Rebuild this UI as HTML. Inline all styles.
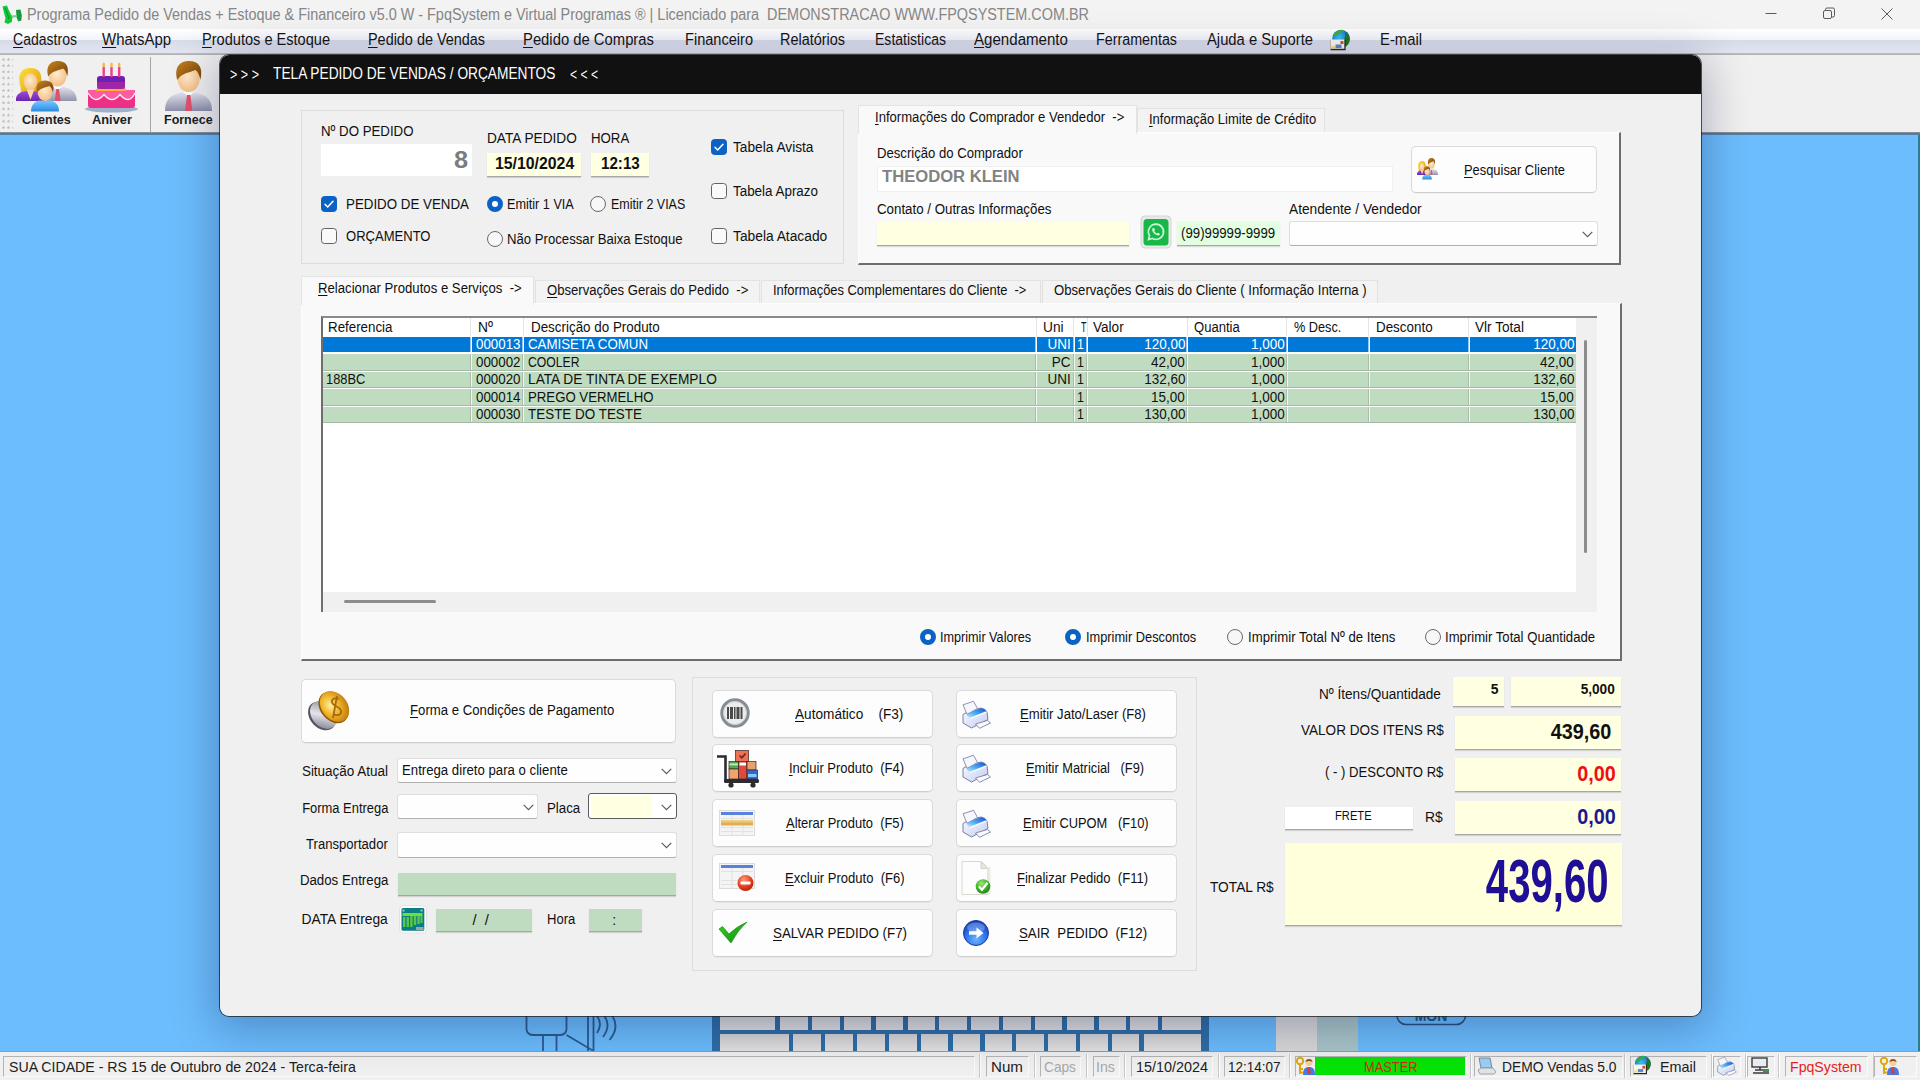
<!DOCTYPE html>
<html lang="pt-BR">
<head>
<meta charset="utf-8">
<title>Programa Pedido de Vendas</title>
<style>
*{box-sizing:border-box;margin:0;padding:0}
html,body{width:1920px;height:1080px;overflow:hidden;background:#6cbdfd;font-family:"Liberation Sans",sans-serif;color:#000}
.a{position:absolute;white-space:nowrap}
.t{white-space:pre;color:#101010}
u{text-decoration-thickness:1px;text-underline-offset:2px}
svg{position:absolute;overflow:visible}
#titlebar{left:0;top:0;width:1920px;height:29px;background:#f3f3f3}
#menubar{left:0;top:29px;width:1920px;height:25px;background:linear-gradient(#ffffff 0%,#f3f4fa 44%,#d7dbe9 48%,#e3e6f1 100%);border-bottom:1px solid #b9bcc6}
#toolbar{left:0;top:54px;width:1920px;height:81px;background:#f0f0f0;border-top:1px solid #b4b4b4}
#tbb{left:0;top:132px;width:1920px;height:3px;background:linear-gradient(#9a9fa4,#566b7e 60%,#5a8fbd)}
#status{left:0;top:1051px;width:1920px;height:29px;background:#f0f0f0;border-top:1px solid #9a9a9a}
.sp{top:1055.5px;height:21px;border:1px solid;border-color:#b4b4b4 #fbfbfb #fbfbfb #b4b4b4;background:#f0f0f0}
.ss{top:1054px;width:2px;height:24px;border-left:1px solid #c8c8c8;border-right:1px solid #fff}
#dlg{left:220px;top:55px;width:1481px;height:961px;background:#f0f0f0;border-radius:9px;overflow:hidden}
#dsh{left:220px;top:55px;width:1481px;height:961px;border-radius:9px;box-shadow:0 0 0 1px rgba(30,30,30,.75),0 8px 44px 6px rgba(0,10,60,.27)}
#in{left:-220px;top:-55px;width:1920px;height:1080px}
#dlgt{left:220px;top:55px;width:1481px;height:39px;background:#111}
.gb{border:1px solid #dcdcdc}
.pn{background:#f9f9f9;border-style:solid;border-color:#fdfdfd #6d6d6d #6d6d6d #fdfdfd;border-width:1px 2px 2px 1px}
.tab{background:#f3f3f3;border:1px solid #e2e2e2;border-bottom:none}
.tabs{background:#f9f9f9;border:1px solid #e4e4e4;border-bottom:none}
.btn{background:#fdfdfd;border:1px solid #dadada;border-bottom-color:#cfcfcf;border-radius:5px;box-shadow:0 1px 0 rgba(0,0,0,.04)}
.cb{background:#fefefe;border:1px solid #dedede;border-bottom-color:#b0b0b0;border-radius:3px}
.in{border-bottom:1px solid #a6a6a6;box-shadow:0 1px 1px rgba(0,0,0,.12)}
.y{background:#ffffe1}
.g{background:#c0dcc0}
.ck{width:16px;height:16px;border-radius:3.5px;border:1px solid #626262;background:#f9f9f9}
.ck.on{background:#0b62c4;border-color:#0b62c4}
.rd{width:16px;height:16px;border-radius:50%;border:1px solid #6a6a6a;background:#f7f7f7}
.rd.on{border:5px solid #0b62c4;background:#fff}
.row{background:#c0dcc0}
.row.sel{background:#0078d7}
.vl{width:2px;background:#e9efe9}
</style>
</head>
<body>

<div class="a" id="titlebar"></div>
<svg style="left:2px;top:5px" width="21.0" height="21.0" viewBox="0 0 21 21"><path d="M.5 1.500L5 .500L6.500 4.500L9 9.500L10.500 11.500L9.800 17L6 19L2.500 17.500L3.500 13L2 8Z" fill="#12c83a"/><path d="M14 5L18.500 4.500L19.800 10.500L19.300 15.500L16.300 16.500L14.600 12.500Z" fill="#189a3c"/><path d="M9.500 10.500L15 10v2L10 12.800z" fill="#7ccf98"/><path d="M3 3l2.500 6L7 14" stroke="#0a9a2a" stroke-width="1.200" fill="none"/></svg>
<span class="a t" style="left:27.3px;top:6.7px;font-size:15.6px;line-height:15.6px;color:#868686;transform:scaleX(0.924);transform-origin:0 0">Programa Pedido de Vendas + Estoque &amp; Financeiro v5.0 W - FpqSystem e Virtual Programas ® | Licenciado para  DEMONSTRACAO WWW.FPQSYSTEM.COM.BR</span>
<svg style="left:1750px;top:0" width="170" height="28" viewBox="0 0 170 28"><g fill="none" stroke="#5a5a5a" stroke-width="1"><path d="M15.5 13.5h11"/><rect x="73.5" y="10.5" width="8" height="8" rx="1.5"/><path d="M75.5 10.5v-1a1.5 1.5 0 0 1 1.5-1.5h6a1.5 1.5 0 0 1 1.5 1.5v6a1.5 1.5 0 0 1-1.5 1.5h-1"/><path d="M131.5 8.5l11 11m0-11l-11 11"/></g></svg>
<div class="a" id="menubar"></div>
<span class="a t" style="left:13px;top:31.64px;font-size:16px;line-height:16px;color:#151515;transform:scaleX(0.877);transform-origin:0 0"><u>C</u>adastros</span>
<span class="a t" style="left:102px;top:31.64px;font-size:16px;line-height:16px;color:#151515;transform:scaleX(0.935);transform-origin:0 0"><u>W</u>hatsApp</span>
<span class="a t" style="left:202px;top:31.64px;font-size:16px;line-height:16px;color:#151515;transform:scaleX(0.911);transform-origin:0 0"><u>P</u>rodutos e Estoque</span>
<span class="a t" style="left:368px;top:31.64px;font-size:16px;line-height:16px;color:#151515;transform:scaleX(0.901);transform-origin:0 0"><u>P</u>edido de Vendas</span>
<span class="a t" style="left:523px;top:31.64px;font-size:16px;line-height:16px;color:#151515;transform:scaleX(0.926);transform-origin:0 0"><u>P</u>edido de Compras</span>
<span class="a t" style="left:685px;top:31.64px;font-size:16px;line-height:16px;color:#151515;transform:scaleX(0.910);transform-origin:0 0">Financeiro</span>
<span class="a t" style="left:780px;top:31.64px;font-size:16px;line-height:16px;color:#151515;transform:scaleX(0.902);transform-origin:0 0">Relatórios</span>
<span class="a t" style="left:875px;top:31.64px;font-size:16px;line-height:16px;color:#151515;transform:scaleX(0.877);transform-origin:0 0">Estatisticas</span>
<span class="a t" style="left:974px;top:31.64px;font-size:16px;line-height:16px;color:#151515;transform:scaleX(0.943);transform-origin:0 0"><u>A</u>gendamento</span>
<span class="a t" style="left:1096px;top:31.64px;font-size:16px;line-height:16px;color:#151515;transform:scaleX(0.893);transform-origin:0 0">Ferramentas</span>
<span class="a t" style="left:1207px;top:31.64px;font-size:16px;line-height:16px;color:#151515;transform:scaleX(0.924);transform-origin:0 0">Ajuda e Suporte</span>
<span class="a t" style="left:1380px;top:31.64px;font-size:16px;line-height:16px;color:#151515;transform:scaleX(0.926);transform-origin:0 0">E-mail</span>
<svg style="left:1329px;top:30px" width="22.0" height="21.0" viewBox="0 0 22 21"><defs><radialGradient id="g1" cx=".4" cy=".45" r=".6"><stop offset="0" stop-color="#38c4f8"/><stop offset="1" stop-color="#1c62c8"/></radialGradient></defs><circle cx="12" cy="8.500" r="8.800" fill="url(#g1)"/><path d="M4.500 4.500C7 0 13-1 16 1c-2 1-5 1.500-7 3.500S6 7 4.500 4.500z" fill="#3cae3a"/><path d="M16 1.500c3 1.500 5 4.500 4.800 8-.3 4-2.500 6.500-5 7.500l-.5-8c1-2 1.500-5 .7-7.500z" fill="#1e7a1c"/><rect x="1.500" y="9.500" width="14.500" height="10" fill="#fbf8ea"/><path d="M1.500 19.500h14.500v-10" fill="none" stroke="#2a2a1e" stroke-width="1.300"/><path d="M1.500 9.500v10" stroke="#b8b8a8" stroke-width=".8"/><rect x="11.500" y="11" width="3" height="3" fill="#d04a3a"/><rect x="6.500" y="14.500" width="6" height="3.500" fill="#5a8ad0"/><rect x="2.500" y="16" width="3.500" height="2.500" fill="#f4dc8a"/></svg>
<div class="a" id="toolbar"></div><div class="a" id="tbb"></div>
<div class="a" style="left:2px;top:58px;width:11px;height:72px;background-image:radial-gradient(circle at 1.5px 1.5px,#c4c4c4 1.1px,transparent 1.4px);background-size:5px 6.2px"></div>
<div class="a" style="left:150px;top:57px;width:1px;height:75px;background:#a6a6a6"></div>
<svg style="overflow:hidden;left:16px;top:61px" width="62.0" height="50.5" viewBox="0 0 62 50.5"><defs><linearGradient id="gsuit" x1="0" y1="0" x2="0" y2="1"><stop offset="0" stop-color="#e2e2ec"/><stop offset="1" stop-color="#8c8ea8"/></linearGradient><radialGradient id="gskin" cx=".45" cy=".4" r=".75"><stop offset="0" stop-color="#ffeccc"/><stop offset="1" stop-color="#f2b474"/></radialGradient><linearGradient id="ghair" x1="0" y1="0" x2="1" y2="1"><stop offset="0" stop-color="#c88420"/><stop offset="1" stop-color="#6e3e06"/></linearGradient><linearGradient id="gblond" x1="0" y1="0" x2="1" y2="1"><stop offset="0" stop-color="#ffe23a"/><stop offset="1" stop-color="#d89410"/></linearGradient><linearGradient id="gpurp" x1="0" y1="0" x2="0" y2="1"><stop offset="0" stop-color="#9a4ae0"/><stop offset="1" stop-color="#5e1ea0"/></linearGradient><linearGradient id="gblue" x1="0" y1="0" x2="0" y2="1"><stop offset="0" stop-color="#7ac8ff"/><stop offset="1" stop-color="#2a8ae0"/></linearGradient></defs><svg x="0" y="0" width="62" height="40" viewBox="0 0 62 40" style="position:static;overflow:hidden"><g transform="translate(22.2 0) scale(0.82)"><path d="M0 50C0 38 5 34.500 16 31.500L31 31.500C42 34.500 47 38 47 50Z" fill="url(#gsuit)"/><path d="M18 31l5.500 5 5.500-5z" fill="#fff"/><path d="M22 34h3.400l2 16h-7.400z" fill="#e2506c"/><ellipse cx="23.600" cy="18" rx="11" ry="13" fill="url(#gskin)"/><path d="M12.300 19C8.500 5 16 0 24 0c9.500 0 14.500 6 11.300 19c-.8-5-2.500-8.500-4.800-10c-6 2.500-14 3-18.200 10z" fill="url(#ghair)"/></g><g transform="translate(2 7) scale(0.86)"><path d="M3 22C-2 5 6 0 14.500 0C24 0 30 6 26 22c0 5 2 8 3 11H0c3-3 4-6 3-11z" fill="url(#gblond)"/><path d="M-3 41C-3 31 1 28.500 8 27h13c7 1.500 11 4 11 14z" fill="url(#gpurp)"/><ellipse cx="14.500" cy="16" rx="8" ry="10" fill="url(#gskin)"/><path d="M10 25l4.500 12 4.500-12z" fill="#fbd8a8"/></g></svg><g transform="translate(18.5 19.5) scale(1.0)"><path d="M-3.500 31C-3.500 24 0 21.500 5 20h11c5 1.500 8.500 4 8.500 11z" fill="url(#gblue)"/><ellipse cx="10.500" cy="11" rx="7.500" ry="9.500" fill="url(#gskin)"/><path d="M2.600 12C0 3 5 0 10.500 0S21 3.500 18.400 12c-.8-3.500-2-5.500-3.500-6.500-4 1.500-9 2-12.300 6.500z" fill="url(#ghair)"/></g></svg>
<svg style="left:85px;top:62px" width="53.0" height="51.0" viewBox="0 0 53 51"><ellipse cx="26.500" cy="47" rx="26.500" ry="3.500" fill="#9fb0cc"/><rect x="3" y="28" width="47" height="18" rx="3" fill="#ee2f86"/><path d="M3 31q4 6.500 8 6.500t8-5q4 5 8 5t8-5q4 5 8 5t7-6.500v-3H3z" fill="#ff5aa4"/><path d="M3 31q4 6.500 8 6.500t8-5q4 5 8 5t8-5q4 5 8 5t7-6.500" fill="none" stroke="#ffe6f0" stroke-width="1.400"/><rect x="12" y="14" width="28" height="13" rx="3" fill="#6a22b4"/><rect x="12" y="20" width="28" height="7" fill="#c42aa0" opacity=".6"/><path d="M11 27h30v2H11z" fill="#ffb02a"/><g fill="#f03a8a"><rect x="17.500" y="5" width="2.400" height="10"/><rect x="25.300" y="5" width="2.400" height="10"/><rect x="33" y="5" width="2.400" height="10"/></g><g fill="#ffb43a"><ellipse cx="18.700" cy="3" rx="1.300" ry="2.400"/><ellipse cx="26.500" cy="3" rx="1.300" ry="2.400"/><ellipse cx="34.200" cy="3" rx="1.300" ry="2.400"/></g></svg>
<svg style="overflow:hidden;left:165px;top:61px" width="48.0" height="50.5" viewBox="0 0 48 50.5"><g transform="translate(0 0) scale(1.0)"><path d="M0 50C0 38 5 34.500 16 31.500L31 31.500C42 34.500 47 38 47 50Z" fill="url(#gsuit)"/><path d="M18 31l5.500 5 5.500-5z" fill="#fff"/><path d="M22 34h3.400l2 16h-7.400z" fill="#e2506c"/><ellipse cx="23.600" cy="18" rx="11" ry="13" fill="url(#gskin)"/><path d="M12.300 19C8.500 5 16 0 24 0c9.500 0 14.500 6 11.300 19c-.8-5-2.500-8.500-4.800-10c-6 2.500-14 3-18.200 10z" fill="url(#ghair)"/></g></svg>
<span class="a t" style="left:21.5px;top:113.95px;font-size:12.2px;line-height:12.2px;font-weight:bold;color:#1e1e1e;transform:scaleX(1.028);transform-origin:0 0">Clientes</span>
<span class="a t" style="left:91.9px;top:113.95px;font-size:12.2px;line-height:12.2px;font-weight:bold;color:#1e1e1e;transform:scaleX(1.054);transform-origin:0 0">Aniver</span>
<span class="a t" style="left:164.4px;top:113.95px;font-size:12.2px;line-height:12.2px;font-weight:bold;color:#1e1e1e;transform:scaleX(1.025);transform-origin:0 0">Fornece</span>
<div class="a" style="left:1918px;top:135px;width:2px;height:916px;background:#2c7c92"></div>
<div class="a" style="left:712px;top:1010px;width:497px;height:41px;background:#2f6ea6"></div>
<div class="a" style="left:719.7px;top:1010px;width:55.5px;height:20px;background:linear-gradient(#d0d0d0,#e0e0e0)"></div><div class="a" style="left:780.1px;top:1010px;width:27.6px;height:20px;background:linear-gradient(#d0d0d0,#e0e0e0)"></div><div class="a" style="left:811.95px;top:1010px;width:27.6px;height:20px;background:linear-gradient(#d0d0d0,#e0e0e0)"></div><div class="a" style="left:843.8px;top:1010px;width:27.6px;height:20px;background:linear-gradient(#d0d0d0,#e0e0e0)"></div><div class="a" style="left:875.65px;top:1010px;width:27.6px;height:20px;background:linear-gradient(#d0d0d0,#e0e0e0)"></div><div class="a" style="left:907.5px;top:1010px;width:27.6px;height:20px;background:linear-gradient(#d0d0d0,#e0e0e0)"></div><div class="a" style="left:939.35px;top:1010px;width:27.6px;height:20px;background:linear-gradient(#d0d0d0,#e0e0e0)"></div><div class="a" style="left:971.2px;top:1010px;width:27.6px;height:20px;background:linear-gradient(#d0d0d0,#e0e0e0)"></div><div class="a" style="left:1003.05px;top:1010px;width:27.6px;height:20px;background:linear-gradient(#d0d0d0,#e0e0e0)"></div><div class="a" style="left:1034.9px;top:1010px;width:27.6px;height:20px;background:linear-gradient(#d0d0d0,#e0e0e0)"></div><div class="a" style="left:1066.75px;top:1010px;width:27.6px;height:20px;background:linear-gradient(#d0d0d0,#e0e0e0)"></div><div class="a" style="left:1098.6px;top:1010px;width:27.6px;height:20px;background:linear-gradient(#d0d0d0,#e0e0e0)"></div><div class="a" style="left:1130.45px;top:1010px;width:27.6px;height:20px;background:linear-gradient(#d0d0d0,#e0e0e0)"></div><div class="a" style="left:1162.3px;top:1010px;width:38.7px;height:20px;background:linear-gradient(#d0d0d0,#e0e0e0)"></div><div class="a" style="left:719.7px;top:1034px;width:69px;height:17px;background:linear-gradient(#d4d4d4,#e4e4e4)"></div><div class="a" style="left:793.4px;top:1034px;width:27.6px;height:17px;background:linear-gradient(#d4d4d4,#e4e4e4)"></div><div class="a" style="left:825.25px;top:1034px;width:27.6px;height:17px;background:linear-gradient(#d4d4d4,#e4e4e4)"></div><div class="a" style="left:857.1px;top:1034px;width:27.6px;height:17px;background:linear-gradient(#d4d4d4,#e4e4e4)"></div><div class="a" style="left:888.95px;top:1034px;width:27.6px;height:17px;background:linear-gradient(#d4d4d4,#e4e4e4)"></div><div class="a" style="left:920.8px;top:1034px;width:27.6px;height:17px;background:linear-gradient(#d4d4d4,#e4e4e4)"></div><div class="a" style="left:952.65px;top:1034px;width:27.6px;height:17px;background:linear-gradient(#d4d4d4,#e4e4e4)"></div><div class="a" style="left:984.5px;top:1034px;width:27.6px;height:17px;background:linear-gradient(#d4d4d4,#e4e4e4)"></div><div class="a" style="left:1016.35px;top:1034px;width:27.6px;height:17px;background:linear-gradient(#d4d4d4,#e4e4e4)"></div><div class="a" style="left:1048.2px;top:1034px;width:27.6px;height:17px;background:linear-gradient(#d4d4d4,#e4e4e4)"></div><div class="a" style="left:1080.05px;top:1034px;width:27.6px;height:17px;background:linear-gradient(#d4d4d4,#e4e4e4)"></div><div class="a" style="left:1111.9px;top:1034px;width:27.6px;height:17px;background:linear-gradient(#d4d4d4,#e4e4e4)"></div><div class="a" style="left:1143.75px;top:1034px;width:57.25px;height:17px;background:linear-gradient(#d4d4d4,#e4e4e4)"></div>
<div class="a" style="left:1276px;top:1010px;width:41px;height:41px;background:#d9d9d9"></div>
<div class="a" style="left:1317px;top:1010px;width:40.5px;height:41px;background:#a9c6c8"></div>
<svg style="left:520px;top:1005px" width="110" height="46" viewBox="520 1005 110 46"><g fill="none" stroke="#2b5c8e" stroke-width="1.8"><rect x="526.5" y="1000" width="40" height="35" rx="6"/><path d="M566.5 1035l27 16V1000"/><path d="M588 1000v51"/><path d="M543 1035v17M556.5 1035v17"/><path d="M597 1016q6 8 0 17M603 1014q9 11 0 23M609.500 1012q12 14 0 28"/></g></svg>
<svg style="left:1390px;top:1005px" width="90" height="30" viewBox="1390 1005 90 30"><rect x="1397" y="1000" width="68.500" height="24.500" rx="9" fill="none" stroke="#27527e" stroke-width="1.6"/><text x="1431" y="1021" font-family="Liberation Sans,sans-serif" font-weight="bold" font-size="14" text-anchor="middle" fill="#27527e">MON</text></svg>
<div class="a" id="status"></div>
<div class="a sp" style="left:3px;width:972px"></div>
<span class="a t" style="left:9px;top:1058.8px;font-size:15px;line-height:15px;color:#202020;transform:scaleX(0.944);transform-origin:0 0">SUA CIDADE - RS 15 de Outubro de 2024 - Terca-feira</span>
<div class="a ss" style="left:979px"></div>
<div class="a ss" style="left:1033.5px"></div>
<div class="a ss" style="left:1086px"></div>
<div class="a ss" style="left:1124px"></div>
<div class="a ss" style="left:1217.5px"></div>
<div class="a ss" style="left:1289px"></div>
<div class="a ss" style="left:1470px"></div>
<div class="a ss" style="left:1624px"></div>
<div class="a ss" style="left:1711px"></div>
<div class="a ss" style="left:1744.5px"></div>
<div class="a ss" style="left:1777.5px"></div>
<div class="a ss" style="left:1873px"></div>
<div class="a sp" style="left:986px;width:43px"></div>
<span class="a t" style="left:990.5px;top:1058.8px;font-size:15px;line-height:15px;color:#202020;transform:scaleX(1.010);transform-origin:0 0">Num</span>
<div class="a sp" style="left:1040px;width:41px"></div>
<span class="a t" style="left:1044px;top:1058.8px;font-size:15px;line-height:15px;color:#a8a8a8;transform:scaleX(0.913);transform-origin:0 0">Caps</span>
<div class="a sp" style="left:1092.5px;width:27.5px"></div>
<span class="a t" style="left:1096px;top:1058.8px;font-size:15px;line-height:15px;color:#a8a8a8;transform:scaleX(0.949);transform-origin:0 0">Ins</span>
<div class="a sp" style="left:1131px;width:81.5px"></div>
<span class="a t" style="left:1135.5px;top:1058.8px;font-size:15px;line-height:15px;color:#202020;transform:scaleX(0.959);transform-origin:0 0">15/10/2024</span>
<div class="a sp" style="left:1224px;width:61px"></div>
<span class="a t" style="left:1227.5px;top:1058.8px;font-size:15px;line-height:15px;color:#202020;transform:scaleX(0.899);transform-origin:0 0">12:14:07</span>
<div class="a sp" style="left:1295px;width:172px"></div>
<svg style="left:1296px;top:1057px" width="20.0" height="18.0" viewBox="0 0 20 18"><circle cx="4" cy="4" r="3.200" fill="none" stroke="#e0a80c" stroke-width="2"/><path d="M4 7v10M4 12h3M4 15.500h3" stroke="#e0a80c" stroke-width="2" fill="none"/><circle cx="13" cy="5.500" r="3.600" fill="#f6cfa0"/><path d="M9.500 5c0-4 7-4 7 0-2-1.500-5-1.500-7 0z" fill="#8a5214"/><path d="M7 18c0-6 2-8 6-8s6 2 6 8z" fill="#4a7ae0"/><path d="M12 10.500h2l.6 6h-3.200z" fill="#e03a3a"/></svg>
<div class="a" style="left:1315px;top:1057px;width:150px;height:17.5px;background:#05e305"></div>
<span class="a t" style="left:1364px;top:1058.8px;font-size:15px;line-height:15px;color:#d02a10;transform:scaleX(0.856);transform-origin:0 0">MASTER</span>
<div class="a sp" style="left:1474px;width:149px"></div>
<svg style="left:1477px;top:1057px" width="20.0" height="18.0" viewBox="0 0 20 18"><path d="M2 1h11l2 10H4z" fill="#9ad0f4" stroke="#7a8a9a"/><path d="M1 13l3-2h12l3 4-2 2H3z" fill="#e0e4ea" stroke="#8a94a0" stroke-width=".8"/></svg>
<span class="a t" style="left:1501.5px;top:1058.8px;font-size:15px;line-height:15px;color:#202020;transform:scaleX(0.922);transform-origin:0 0">DEMO Vendas 5.0</span>
<div class="a sp" style="left:1630px;width:77px"></div>
<svg style="left:1632px;top:1056px" width="19.8" height="18.9" viewBox="0 0 22 21"><defs><radialGradient id="g2" cx=".4" cy=".45" r=".6"><stop offset="0" stop-color="#38c4f8"/><stop offset="1" stop-color="#1c62c8"/></radialGradient></defs><circle cx="12" cy="8.500" r="8.800" fill="url(#g2)"/><path d="M4.500 4.500C7 0 13-1 16 1c-2 1-5 1.500-7 3.500S6 7 4.500 4.500z" fill="#3cae3a"/><path d="M16 1.500c3 1.500 5 4.500 4.800 8-.3 4-2.500 6.500-5 7.500l-.5-8c1-2 1.500-5 .7-7.500z" fill="#1e7a1c"/><rect x="1.500" y="9.500" width="14.500" height="10" fill="#fbf8ea"/><path d="M1.500 19.500h14.500v-10" fill="none" stroke="#2a2a1e" stroke-width="1.300"/><path d="M1.500 9.500v10" stroke="#b8b8a8" stroke-width=".8"/><rect x="11.500" y="11" width="3" height="3" fill="#d04a3a"/><rect x="6.500" y="14.500" width="6" height="3.500" fill="#5a8ad0"/><rect x="2.500" y="16" width="3.500" height="2.500" fill="#f4dc8a"/></svg>
<span class="a t" style="left:1660px;top:1058.8px;font-size:15px;line-height:15px;color:#202020;transform:scaleX(0.960);transform-origin:0 0">Email</span>
<div class="a sp" style="left:1713px;width:28px"></div>
<svg style="left:1717px;top:1057px" width="19.72" height="19.04" viewBox="0 0 29 28"><defs><linearGradient id="g3" x1="0" y1="1" x2="1" y2="0"><stop offset="0" stop-color="#c8f0ff"/><stop offset=".45" stop-color="#4ab0f4"/><stop offset="1" stop-color="#1a4ed8"/></linearGradient><linearGradient id="g4" x1="0" y1="0" x2="1" y2="1"><stop offset="0" stop-color="#fafbff"/><stop offset="1" stop-color="#c4ccf2"/></linearGradient></defs><path d="M1 13.500L7 10L19 7Q24 8 25 11L26 18.500L9.500 27L1 22Z" fill="url(#g4)" stroke="#6c7496" stroke-width=".9" stroke-linejoin="round"/><path d="M4.500 14L12 9.500L19 7.300Q23.500 8 24.300 10.600L8 17.500Z" fill="url(#g3)"/><path d="M1 3.800L11.500.300L15.500 7.500L12 9.500L5 13.300Z" fill="#f6f6ff" stroke="#8088a8" stroke-width=".9" stroke-linejoin="round"/><path d="M8 17.500L24.500 11" fill="none" stroke="#f4f8ff" stroke-width="1.600"/><path d="M13.500 23L25.500 19.500L28.500 22L17.500 27.300Z" fill="#fafaff" stroke="#7a82a0" stroke-width=".9" stroke-linejoin="round"/></svg>
<div class="a sp" style="left:1747px;width:28px"></div>
<svg style="left:1751px;top:1057px" width="20.0" height="18.0" viewBox="0 0 20 18"><rect x="1" y="1" width="15" height="9" fill="#e8ecf0" stroke="#3a3a3a" stroke-width="1.400"/><path d="M4 13h10M9 10v3M2 16h16" stroke="#3a3a3a" stroke-width="1.600"/><rect x="12" y="12" width="6" height="3" fill="#4a8a4a"/></svg>
<div class="a sp" style="left:1785px;width:82.5px"></div>
<span class="a t" style="left:1790px;top:1058.8px;font-size:15px;line-height:15px;color:#e8201c;transform:scaleX(0.943);transform-origin:0 0">FpqSystem</span>
<div class="a sp" style="left:1874px;width:43px"></div>
<svg style="left:1880px;top:1057px" width="20.0" height="18.0" viewBox="0 0 20 18"><circle cx="4" cy="4" r="3.200" fill="none" stroke="#e0a80c" stroke-width="2"/><path d="M4 7v10M4 12h3M4 15.500h3" stroke="#e0a80c" stroke-width="2" fill="none"/><circle cx="13" cy="5.500" r="3.600" fill="#f6cfa0"/><path d="M9.500 5c0-4 7-4 7 0-2-1.500-5-1.500-7 0z" fill="#8a5214"/><path d="M7 18c0-6 2-8 6-8s6 2 6 8z" fill="#4a7ae0"/><path d="M12 10.500h2l.6 6h-3.200z" fill="#e03a3a"/></svg>
<div class="a" id="dsh"></div><div class="a" id="dlg"><div class="a" id="in">
<div class="a" id="dlgt"></div>
<span class="a t" style="left:230px;top:66.64px;font-size:16px;line-height:16px;color:#fff;transform:scaleX(0.785);transform-origin:0 0">&gt; &gt; &gt;</span>
<span class="a t" style="left:273px;top:66.24px;font-size:16px;line-height:16px;color:#fff;transform:scaleX(0.857);transform-origin:0 0">TELA PEDIDO DE VENDAS / ORÇAMENTOS</span>
<span class="a t" style="left:570px;top:66.64px;font-size:16px;line-height:16px;color:#fff;transform:scaleX(0.758);transform-origin:0 0">&lt; &lt; &lt;</span>
<div class="a gb" style="left:301px;top:110px;width:543px;height:154px;"></div>
<span class="a t" style="left:320.5px;top:123.02px;font-size:15.5px;line-height:15.5px;transform:scaleX(0.855);transform-origin:0 0">Nº DO PEDIDO</span>
<div class="a" style="left:321px;top:144px;width:151px;height:32px;background:#fff"></div>
<span class="a t" style="left:454.92px;top:148.74px;font-size:23.5px;line-height:23.5px;font-weight:bold;color:#7c7c7c;transform:scaleX(1.080);transform-origin:100% 0">8</span>
<span class="a t" style="left:486.75px;top:129.52px;font-size:15.5px;line-height:15.5px;transform:scaleX(0.881);transform-origin:0 0">DATA PEDIDO</span>
<span class="a t" style="left:590.5px;top:129.52px;font-size:15.5px;line-height:15.5px;transform:scaleX(0.854);transform-origin:0 0">HORA</span>
<div class="a in y" style="left:487px;top:152.5px;width:94px;height:24.5px;"></div>
<span class="a t" style="left:494.5px;top:155.13px;font-size:17.3px;line-height:17.3px;font-weight:bold;transform:scaleX(0.916);transform-origin:0 0">15/10/2024</span>
<div class="a in y" style="left:591px;top:152.5px;width:58px;height:24.5px;"></div>
<span class="a t" style="left:600.75px;top:155.13px;font-size:17.3px;line-height:17.3px;font-weight:bold;transform:scaleX(0.877);transform-origin:0 0">12:13</span>
<div class="a ck on" style="left:321px;top:196px"><svg style="left:-1px;top:-1px" width="16" height="16" viewBox="0 0 16 16"><path d="M4 8.300l2.700 2.700 5.300-5.800" fill="none" stroke="#fff" stroke-width="1.500" stroke-linecap="round" stroke-linejoin="round"/></svg></div>
<span class="a t" style="left:345.5px;top:195.77px;font-size:15.5px;line-height:15.5px;transform:scaleX(0.860);transform-origin:0 0">PEDIDO DE VENDA</span>
<div class="a ck" style="left:321px;top:228px"></div>
<span class="a t" style="left:345.5px;top:228.27px;font-size:15.5px;line-height:15.5px;transform:scaleX(0.841);transform-origin:0 0">ORÇAMENTO</span>
<div class="a rd on" style="left:486.5px;top:196px"></div>
<span class="a t" style="left:507px;top:195.77px;font-size:15.5px;line-height:15.5px;transform:scaleX(0.816);transform-origin:0 0">Emitir 1 VIA</span>
<div class="a rd" style="left:590px;top:196px"></div>
<span class="a t" style="left:610.75px;top:195.77px;font-size:15.5px;line-height:15.5px;transform:scaleX(0.806);transform-origin:0 0">Emitir 2 VIAS</span>
<div class="a rd" style="left:486.5px;top:231px"></div>
<span class="a t" style="left:507px;top:230.77px;font-size:15.5px;line-height:15.5px;transform:scaleX(0.849);transform-origin:0 0">Não Processar Baixa Estoque</span>
<div class="a ck on" style="left:711px;top:139px"><svg style="left:-1px;top:-1px" width="16" height="16" viewBox="0 0 16 16"><path d="M4 8.300l2.700 2.700 5.300-5.800" fill="none" stroke="#fff" stroke-width="1.500" stroke-linecap="round" stroke-linejoin="round"/></svg></div>
<span class="a t" style="left:732.5px;top:139.27px;font-size:15.5px;line-height:15.5px;transform:scaleX(0.884);transform-origin:0 0">Tabela Avista</span>
<div class="a ck" style="left:711px;top:183px"></div>
<span class="a t" style="left:732.5px;top:183.27px;font-size:15.5px;line-height:15.5px;transform:scaleX(0.865);transform-origin:0 0">Tabela Aprazo</span>
<div class="a ck" style="left:711px;top:228px"></div>
<span class="a t" style="left:732.5px;top:228.27px;font-size:15.5px;line-height:15.5px;transform:scaleX(0.889);transform-origin:0 0">Tabela Atacado</span>
<div class="a tab" style="left:1137px;top:107.5px;width:188px;height:25.5px;"></div>
<div class="a pn" style="left:857.5px;top:132px;width:763.5px;height:133px;"></div>
<div class="a tabs" style="left:857.5px;top:105px;width:279px;height:29px;"></div>
<span class="a t" style="left:875px;top:108.52px;font-size:15.5px;line-height:15.5px;transform:scaleX(0.845);transform-origin:0 0"><u>I</u>nformações do Comprador e Vendedor  -&gt;</span>
<span class="a t" style="left:1149px;top:110.77px;font-size:15.5px;line-height:15.5px;transform:scaleX(0.840);transform-origin:0 0"><u>I</u>nformação Limite de Crédito</span>
<span class="a t" style="left:876.75px;top:144.52px;font-size:15.5px;line-height:15.5px;transform:scaleX(0.846);transform-origin:0 0">Descrição do Comprador</span>
<div class="a" style="left:877px;top:166px;width:515.5px;height:26px;background:#fff;border:1px solid #f0f0f0"></div>
<span class="a t" style="left:882px;top:168.71px;font-size:16.8px;line-height:16.8px;font-weight:bold;color:#828282;transform:scaleX(0.990);transform-origin:0 0">THEODOR KLEIN</span>
<div class="a btn" style="left:1410.5px;top:146px;width:186.5px;height:47px;"></div>
<svg style="left:1417px;top:158px" width="21.500" height="21.500" viewBox="0 0 62 50.500" preserveAspectRatio="none"><svg x="0" y="0" width="62" height="40" viewBox="0 0 62 40" style="position:static;overflow:hidden"><g transform="translate(22.2 0) scale(0.82)"><path d="M0 50C0 38 5 34.500 16 31.500L31 31.500C42 34.500 47 38 47 50Z" fill="url(#gsuit)"/><path d="M18 31l5.500 5 5.500-5z" fill="#fff"/><path d="M22 34h3.400l2 16h-7.400z" fill="#e2506c"/><ellipse cx="23.600" cy="18" rx="11" ry="13" fill="url(#gskin)"/><path d="M12.300 19C8.500 5 16 0 24 0c9.500 0 14.500 6 11.300 19c-.8-5-2.500-8.500-4.800-10c-6 2.500-14 3-18.200 10z" fill="url(#ghair)"/></g><g transform="translate(2 7) scale(0.86)"><path d="M3 22C-2 5 6 0 14.500 0C24 0 30 6 26 22c0 5 2 8 3 11H0c3-3 4-6 3-11z" fill="url(#gblond)"/><path d="M-3 41C-3 31 1 28.500 8 27h13c7 1.500 11 4 11 14z" fill="url(#gpurp)"/><ellipse cx="14.500" cy="16" rx="8" ry="10" fill="url(#gskin)"/><path d="M10 25l4.500 12 4.500-12z" fill="#fbd8a8"/></g></svg><g transform="translate(18.5 19.5) scale(1.0)"><path d="M-3.500 31C-3.500 24 0 21.500 5 20h11c5 1.500 8.500 4 8.500 11z" fill="url(#gblue)"/><ellipse cx="10.500" cy="11" rx="7.500" ry="9.500" fill="url(#gskin)"/><path d="M2.600 12C0 3 5 0 10.500 0S21 3.500 18.400 12c-.8-3.500-2-5.500-3.500-6.500-4 1.500-9 2-12.300 6.500z" fill="url(#ghair)"/></g></svg>
<span class="a t" style="left:1464px;top:162.12px;font-size:15.5px;line-height:15.5px;transform:scaleX(0.831);transform-origin:0 0"><u>P</u>esquisar Cliente</span>
<span class="a t" style="left:876.75px;top:200.52px;font-size:15.5px;line-height:15.5px;transform:scaleX(0.858);transform-origin:0 0">Contato / Outras Informações</span>
<div class="a in y" style="left:876.5px;top:221.5px;width:252.5px;height:24.5px;"></div>
<svg style="left:1141px;top:215.5px" width="30.0" height="32.0" viewBox="0 0 30 32"><rect x="0" y="0" width="30" height="32" rx="4" fill="#e9e9e9" stroke="#d4d4d4"/><rect x="2.500" y="3" width="25" height="26.500" rx="3.500" fill="#18b848"/><path d="M15 8.200a7.600 7.600 0 0 0-6.500 11.500l-1 3.800 3.900-1a7.600 7.600 0 1 0 3.600-14.300z" fill="none" stroke="#c4f6d4" stroke-width="1.700"/><path d="M12.300 12c-.5 0-1.200.6-1.200 1.600 0 2.600 3.600 5.800 6 5.800 1 0 1.800-.7 1.800-1.400 0-.4-1.700-1.300-2-1.300-.4 0-.6.800-1 .8-.8 0-2.600-1.700-2.600-2.400 0-.4.700-.7.700-1.100 0-.4-.8-2-1.700-2z" fill="#d4fae0"/></svg>
<div class="a in" style="left:1177px;top:221px;width:102.5px;height:25px;background:#e2ffe2"></div>
<span class="a t" style="left:1181.25px;top:225.02px;font-size:15.5px;line-height:15.5px;transform:scaleX(0.854);transform-origin:0 0">(99)99999-9999</span>
<span class="a t" style="left:1288.75px;top:200.52px;font-size:15.5px;line-height:15.5px;transform:scaleX(0.884);transform-origin:0 0">Atendente / Vendedor</span>
<div class="a cb" style="left:1289px;top:221px;width:309px;height:25px;"></div>
<svg style="left:1582px;top:231px" width="11" height="7" viewBox="0 0 11 7"><path d="M.7.800l4.800 4.800 4.800-4.800" fill="none" stroke="#5c5c5c" stroke-width="1.200"/></svg>
<div class="a tab" style="left:534.5px;top:279.5px;width:225.5px;height:24.5px;"></div>
<div class="a tab" style="left:761px;top:279.5px;width:280px;height:24.5px;"></div>
<div class="a tab" style="left:1042px;top:279.5px;width:336px;height:24.5px;"></div>
<div class="a pn" style="left:300.5px;top:303px;width:1321px;height:357.5px;"></div>
<div class="a tabs" style="left:300.5px;top:276px;width:233px;height:29px;"></div>
<span class="a t" style="left:317.5px;top:279.52px;font-size:15.5px;line-height:15.5px;transform:scaleX(0.849);transform-origin:0 0"><u>R</u>elacionar Produtos e Serviços  -&gt;</span>
<span class="a t" style="left:546.75px;top:282.02px;font-size:15.5px;line-height:15.5px;transform:scaleX(0.845);transform-origin:0 0"><u>O</u>bservações Gerais do Pedido  -&gt;</span>
<span class="a t" style="left:772.5px;top:282.02px;font-size:15.5px;line-height:15.5px;transform:scaleX(0.832);transform-origin:0 0">Informações Complementares do Cliente  -&gt;</span>
<span class="a t" style="left:1054px;top:282.02px;font-size:15.5px;line-height:15.5px;transform:scaleX(0.848);transform-origin:0 0">Observações Gerais do Cliente ( Informação Interna )</span>
<div class="a" style="left:320.5px;top:315.75px;width:1276.5px;height:296.5px;background:#f0f0f0;border-left:2px solid #6e6e6e;border-top:2px solid #8a8a8a"></div>
<div class="a" style="left:322.5px;top:317.75px;width:1253.5px;height:274px;background:#fff"></div>
<span class="a t" style="left:328px;top:318.77px;font-size:15.5px;line-height:15.5px;transform:scaleX(0.860);transform-origin:0 0">Referencia</span>
<span class="a t" style="left:478px;top:318.77px;font-size:15.5px;line-height:15.5px;transform:scaleX(0.890);transform-origin:0 0">Nº</span>
<span class="a t" style="left:530.5px;top:318.77px;font-size:15.5px;line-height:15.5px;transform:scaleX(0.864);transform-origin:0 0">Descrição do Produto</span>
<span class="a t" style="left:1042.7px;top:318.77px;font-size:15.5px;line-height:15.5px;transform:scaleX(0.885);transform-origin:0 0">Uni</span>
<span class="a t" style="left:1081px;top:318.77px;font-size:15.5px;line-height:15.5px;transform:scaleX(0.570);transform-origin:0 0">T</span>
<span class="a t" style="left:1093.3px;top:318.77px;font-size:15.5px;line-height:15.5px;transform:scaleX(0.876);transform-origin:0 0">Valor</span>
<span class="a t" style="left:1194.3px;top:318.77px;font-size:15.5px;line-height:15.5px;transform:scaleX(0.842);transform-origin:0 0">Quantia</span>
<span class="a t" style="left:1294.3px;top:318.77px;font-size:15.5px;line-height:15.5px;transform:scaleX(0.821);transform-origin:0 0">% Desc.</span>
<span class="a t" style="left:1375.7px;top:318.77px;font-size:15.5px;line-height:15.5px;transform:scaleX(0.864);transform-origin:0 0">Desconto</span>
<span class="a t" style="left:1475px;top:318.77px;font-size:15.5px;line-height:15.5px;transform:scaleX(0.879);transform-origin:0 0">Vlr Total</span>
<div class="a" style="left:470.25px;top:318px;width:1px;height:18px;background:#e4e4e4"></div>
<div class="a" style="left:522.75px;top:318px;width:1px;height:18px;background:#e4e4e4"></div>
<div class="a" style="left:1035.7px;top:318px;width:1px;height:18px;background:#e4e4e4"></div>
<div class="a" style="left:1073px;top:318px;width:1px;height:18px;background:#e4e4e4"></div>
<div class="a" style="left:1086.7px;top:318px;width:1px;height:18px;background:#e4e4e4"></div>
<div class="a" style="left:1186.7px;top:318px;width:1px;height:18px;background:#e4e4e4"></div>
<div class="a" style="left:1286.3px;top:318px;width:1px;height:18px;background:#e4e4e4"></div>
<div class="a" style="left:1368px;top:318px;width:1px;height:18px;background:#e4e4e4"></div>
<div class="a" style="left:1468px;top:318px;width:1px;height:18px;background:#e4e4e4"></div>
<div class="a row sel" style="left:322.5px;top:336.75px;width:1253.2px;height:15.5px;"></div>
<div class="a" style="left:469.75px;top:336.75px;width:2px;height:15.5px;background:linear-gradient(90deg,#9cc4ee 50%,#fff 50%)"></div>
<div class="a" style="left:522.25px;top:336.75px;width:2px;height:15.5px;background:linear-gradient(90deg,#9cc4ee 50%,#fff 50%)"></div>
<div class="a" style="left:1035.2px;top:336.75px;width:2px;height:15.5px;background:linear-gradient(90deg,#9cc4ee 50%,#fff 50%)"></div>
<div class="a" style="left:1072.5px;top:336.75px;width:2px;height:15.5px;background:linear-gradient(90deg,#9cc4ee 50%,#fff 50%)"></div>
<div class="a" style="left:1086.2px;top:336.75px;width:2px;height:15.5px;background:linear-gradient(90deg,#9cc4ee 50%,#fff 50%)"></div>
<div class="a" style="left:1186.2px;top:336.75px;width:2px;height:15.5px;background:linear-gradient(90deg,#9cc4ee 50%,#fff 50%)"></div>
<div class="a" style="left:1285.8px;top:336.75px;width:2px;height:15.5px;background:linear-gradient(90deg,#9cc4ee 50%,#fff 50%)"></div>
<div class="a" style="left:1367.5px;top:336.75px;width:2px;height:15.5px;background:linear-gradient(90deg,#9cc4ee 50%,#fff 50%)"></div>
<div class="a" style="left:1467.5px;top:336.75px;width:2px;height:15.5px;background:linear-gradient(90deg,#9cc4ee 50%,#fff 50%)"></div>
<span class="a t" style="left:475.5px;top:336.37px;font-size:15.5px;line-height:15.5px;color:#fff;transform:scaleX(0.860);transform-origin:0 0">000013</span>
<span class="a t" style="left:528px;top:336.37px;font-size:15.5px;line-height:15.5px;color:#fff;transform:scaleX(0.857);transform-origin:0 0">CAMISETA COMUN</span>
<span class="a t" style="left:1044px;top:336.37px;font-size:15.5px;line-height:15.5px;color:#fff;transform:scaleX(0.870);transform-origin:100% 0">UNI</span>
<span class="a t" style="left:1077.3px;top:336.37px;font-size:15.5px;line-height:15.5px;color:#fff;transform:scaleX(0.800);transform-origin:0 0">1</span>
<span class="a t" style="left:1137.58px;top:336.37px;font-size:15.5px;line-height:15.5px;color:#fff;transform:scaleX(0.870);transform-origin:100% 0">120,00</span>
<span class="a t" style="left:1246.2px;top:336.37px;font-size:15.5px;line-height:15.5px;color:#fff;transform:scaleX(0.870);transform-origin:100% 0">1,000</span>
<span class="a t" style="left:1526.58px;top:336.37px;font-size:15.5px;line-height:15.5px;color:#fff;transform:scaleX(0.870);transform-origin:100% 0">120,00</span>
<div class="a row" style="left:322.5px;top:354.25px;width:1253.2px;height:15.5px;box-shadow:0 1px 0 #a9b9a9"></div>
<div class="a" style="left:469.75px;top:354.25px;width:2px;height:15.5px;background:linear-gradient(90deg,#aebcae 50%,#f2f6f2 50%)"></div>
<div class="a" style="left:522.25px;top:354.25px;width:2px;height:15.5px;background:linear-gradient(90deg,#aebcae 50%,#f2f6f2 50%)"></div>
<div class="a" style="left:1035.2px;top:354.25px;width:2px;height:15.5px;background:linear-gradient(90deg,#aebcae 50%,#f2f6f2 50%)"></div>
<div class="a" style="left:1072.5px;top:354.25px;width:2px;height:15.5px;background:linear-gradient(90deg,#aebcae 50%,#f2f6f2 50%)"></div>
<div class="a" style="left:1086.2px;top:354.25px;width:2px;height:15.5px;background:linear-gradient(90deg,#aebcae 50%,#f2f6f2 50%)"></div>
<div class="a" style="left:1186.2px;top:354.25px;width:2px;height:15.5px;background:linear-gradient(90deg,#aebcae 50%,#f2f6f2 50%)"></div>
<div class="a" style="left:1285.8px;top:354.25px;width:2px;height:15.5px;background:linear-gradient(90deg,#aebcae 50%,#f2f6f2 50%)"></div>
<div class="a" style="left:1367.5px;top:354.25px;width:2px;height:15.5px;background:linear-gradient(90deg,#aebcae 50%,#f2f6f2 50%)"></div>
<div class="a" style="left:1467.5px;top:354.25px;width:2px;height:15.5px;background:linear-gradient(90deg,#aebcae 50%,#f2f6f2 50%)"></div>
<span class="a t" style="left:475.5px;top:353.87px;font-size:15.5px;line-height:15.5px;color:#101010;transform:scaleX(0.860);transform-origin:0 0">000002</span>
<span class="a t" style="left:528px;top:353.87px;font-size:15.5px;line-height:15.5px;color:#101010;transform:scaleX(0.787);transform-origin:0 0">COOLER</span>
<span class="a t" style="left:1049.15px;top:353.87px;font-size:15.5px;line-height:15.5px;color:#101010;transform:scaleX(0.870);transform-origin:100% 0">PC</span>
<span class="a t" style="left:1077.3px;top:353.87px;font-size:15.5px;line-height:15.5px;color:#101010;transform:scaleX(0.800);transform-origin:0 0">1</span>
<span class="a t" style="left:1146.2px;top:353.87px;font-size:15.5px;line-height:15.5px;color:#101010;transform:scaleX(0.870);transform-origin:100% 0">42,00</span>
<span class="a t" style="left:1246.2px;top:353.87px;font-size:15.5px;line-height:15.5px;color:#101010;transform:scaleX(0.870);transform-origin:100% 0">1,000</span>
<span class="a t" style="left:1535.2px;top:353.87px;font-size:15.5px;line-height:15.5px;color:#101010;transform:scaleX(0.870);transform-origin:100% 0">42,00</span>
<div class="a row" style="left:322.5px;top:371.75px;width:1253.2px;height:15.5px;box-shadow:0 1px 0 #a9b9a9"></div>
<div class="a" style="left:469.75px;top:371.75px;width:2px;height:15.5px;background:linear-gradient(90deg,#aebcae 50%,#f2f6f2 50%)"></div>
<div class="a" style="left:522.25px;top:371.75px;width:2px;height:15.5px;background:linear-gradient(90deg,#aebcae 50%,#f2f6f2 50%)"></div>
<div class="a" style="left:1035.2px;top:371.75px;width:2px;height:15.5px;background:linear-gradient(90deg,#aebcae 50%,#f2f6f2 50%)"></div>
<div class="a" style="left:1072.5px;top:371.75px;width:2px;height:15.5px;background:linear-gradient(90deg,#aebcae 50%,#f2f6f2 50%)"></div>
<div class="a" style="left:1086.2px;top:371.75px;width:2px;height:15.5px;background:linear-gradient(90deg,#aebcae 50%,#f2f6f2 50%)"></div>
<div class="a" style="left:1186.2px;top:371.75px;width:2px;height:15.5px;background:linear-gradient(90deg,#aebcae 50%,#f2f6f2 50%)"></div>
<div class="a" style="left:1285.8px;top:371.75px;width:2px;height:15.5px;background:linear-gradient(90deg,#aebcae 50%,#f2f6f2 50%)"></div>
<div class="a" style="left:1367.5px;top:371.75px;width:2px;height:15.5px;background:linear-gradient(90deg,#aebcae 50%,#f2f6f2 50%)"></div>
<div class="a" style="left:1467.5px;top:371.75px;width:2px;height:15.5px;background:linear-gradient(90deg,#aebcae 50%,#f2f6f2 50%)"></div>
<span class="a t" style="left:325.75px;top:371.37px;font-size:15.5px;line-height:15.5px;color:#101010;transform:scaleX(0.828);transform-origin:0 0">188BC</span>
<span class="a t" style="left:475.5px;top:371.37px;font-size:15.5px;line-height:15.5px;color:#101010;transform:scaleX(0.860);transform-origin:0 0">000020</span>
<span class="a t" style="left:528px;top:371.37px;font-size:15.5px;line-height:15.5px;color:#101010;transform:scaleX(0.885);transform-origin:0 0">LATA DE TINTA DE EXEMPLO</span>
<span class="a t" style="left:1044px;top:371.37px;font-size:15.5px;line-height:15.5px;color:#101010;transform:scaleX(0.870);transform-origin:100% 0">UNI</span>
<span class="a t" style="left:1077.3px;top:371.37px;font-size:15.5px;line-height:15.5px;color:#101010;transform:scaleX(0.800);transform-origin:0 0">1</span>
<span class="a t" style="left:1137.58px;top:371.37px;font-size:15.5px;line-height:15.5px;color:#101010;transform:scaleX(0.870);transform-origin:100% 0">132,60</span>
<span class="a t" style="left:1246.2px;top:371.37px;font-size:15.5px;line-height:15.5px;color:#101010;transform:scaleX(0.870);transform-origin:100% 0">1,000</span>
<span class="a t" style="left:1526.58px;top:371.37px;font-size:15.5px;line-height:15.5px;color:#101010;transform:scaleX(0.870);transform-origin:100% 0">132,60</span>
<div class="a row" style="left:322.5px;top:389.25px;width:1253.2px;height:15.5px;box-shadow:0 1px 0 #a9b9a9"></div>
<div class="a" style="left:469.75px;top:389.25px;width:2px;height:15.5px;background:linear-gradient(90deg,#aebcae 50%,#f2f6f2 50%)"></div>
<div class="a" style="left:522.25px;top:389.25px;width:2px;height:15.5px;background:linear-gradient(90deg,#aebcae 50%,#f2f6f2 50%)"></div>
<div class="a" style="left:1035.2px;top:389.25px;width:2px;height:15.5px;background:linear-gradient(90deg,#aebcae 50%,#f2f6f2 50%)"></div>
<div class="a" style="left:1072.5px;top:389.25px;width:2px;height:15.5px;background:linear-gradient(90deg,#aebcae 50%,#f2f6f2 50%)"></div>
<div class="a" style="left:1086.2px;top:389.25px;width:2px;height:15.5px;background:linear-gradient(90deg,#aebcae 50%,#f2f6f2 50%)"></div>
<div class="a" style="left:1186.2px;top:389.25px;width:2px;height:15.5px;background:linear-gradient(90deg,#aebcae 50%,#f2f6f2 50%)"></div>
<div class="a" style="left:1285.8px;top:389.25px;width:2px;height:15.5px;background:linear-gradient(90deg,#aebcae 50%,#f2f6f2 50%)"></div>
<div class="a" style="left:1367.5px;top:389.25px;width:2px;height:15.5px;background:linear-gradient(90deg,#aebcae 50%,#f2f6f2 50%)"></div>
<div class="a" style="left:1467.5px;top:389.25px;width:2px;height:15.5px;background:linear-gradient(90deg,#aebcae 50%,#f2f6f2 50%)"></div>
<span class="a t" style="left:475.5px;top:388.87px;font-size:15.5px;line-height:15.5px;color:#101010;transform:scaleX(0.860);transform-origin:0 0">000014</span>
<span class="a t" style="left:528px;top:388.87px;font-size:15.5px;line-height:15.5px;color:#101010;transform:scaleX(0.852);transform-origin:0 0">PREGO VERMELHO</span>
<span class="a t" style="left:1077.3px;top:388.87px;font-size:15.5px;line-height:15.5px;color:#101010;transform:scaleX(0.800);transform-origin:0 0">1</span>
<span class="a t" style="left:1146.2px;top:388.87px;font-size:15.5px;line-height:15.5px;color:#101010;transform:scaleX(0.870);transform-origin:100% 0">15,00</span>
<span class="a t" style="left:1246.2px;top:388.87px;font-size:15.5px;line-height:15.5px;color:#101010;transform:scaleX(0.870);transform-origin:100% 0">1,000</span>
<span class="a t" style="left:1535.2px;top:388.87px;font-size:15.5px;line-height:15.5px;color:#101010;transform:scaleX(0.870);transform-origin:100% 0">15,00</span>
<div class="a row" style="left:322.5px;top:406.75px;width:1253.2px;height:15.5px;box-shadow:0 1px 0 #a9b9a9"></div>
<div class="a" style="left:469.75px;top:406.75px;width:2px;height:15.5px;background:linear-gradient(90deg,#aebcae 50%,#f2f6f2 50%)"></div>
<div class="a" style="left:522.25px;top:406.75px;width:2px;height:15.5px;background:linear-gradient(90deg,#aebcae 50%,#f2f6f2 50%)"></div>
<div class="a" style="left:1035.2px;top:406.75px;width:2px;height:15.5px;background:linear-gradient(90deg,#aebcae 50%,#f2f6f2 50%)"></div>
<div class="a" style="left:1072.5px;top:406.75px;width:2px;height:15.5px;background:linear-gradient(90deg,#aebcae 50%,#f2f6f2 50%)"></div>
<div class="a" style="left:1086.2px;top:406.75px;width:2px;height:15.5px;background:linear-gradient(90deg,#aebcae 50%,#f2f6f2 50%)"></div>
<div class="a" style="left:1186.2px;top:406.75px;width:2px;height:15.5px;background:linear-gradient(90deg,#aebcae 50%,#f2f6f2 50%)"></div>
<div class="a" style="left:1285.8px;top:406.75px;width:2px;height:15.5px;background:linear-gradient(90deg,#aebcae 50%,#f2f6f2 50%)"></div>
<div class="a" style="left:1367.5px;top:406.75px;width:2px;height:15.5px;background:linear-gradient(90deg,#aebcae 50%,#f2f6f2 50%)"></div>
<div class="a" style="left:1467.5px;top:406.75px;width:2px;height:15.5px;background:linear-gradient(90deg,#aebcae 50%,#f2f6f2 50%)"></div>
<span class="a t" style="left:475.5px;top:406.37px;font-size:15.5px;line-height:15.5px;color:#101010;transform:scaleX(0.860);transform-origin:0 0">000030</span>
<span class="a t" style="left:528px;top:406.37px;font-size:15.5px;line-height:15.5px;color:#101010;transform:scaleX(0.867);transform-origin:0 0">TESTE DO TESTE</span>
<span class="a t" style="left:1077.3px;top:406.37px;font-size:15.5px;line-height:15.5px;color:#101010;transform:scaleX(0.800);transform-origin:0 0">1</span>
<span class="a t" style="left:1137.58px;top:406.37px;font-size:15.5px;line-height:15.5px;color:#101010;transform:scaleX(0.870);transform-origin:100% 0">130,00</span>
<span class="a t" style="left:1246.2px;top:406.37px;font-size:15.5px;line-height:15.5px;color:#101010;transform:scaleX(0.870);transform-origin:100% 0">1,000</span>
<span class="a t" style="left:1526.58px;top:406.37px;font-size:15.5px;line-height:15.5px;color:#101010;transform:scaleX(0.870);transform-origin:100% 0">130,00</span>
<div class="a" style="left:1583.5px;top:340px;width:3px;height:213px;background:#8c8c8c;border-radius:1.5px"></div>
<div class="a" style="left:343.75px;top:600px;width:92px;height:3px;background:#8c8c8c;border-radius:1.5px"></div>
<div class="a rd on" style="left:919.5px;top:628.7px"></div>
<span class="a t" style="left:940.3px;top:628.82px;font-size:15.5px;line-height:15.5px;transform:scaleX(0.815);transform-origin:0 0">Imprimir Valores</span>
<div class="a rd on" style="left:1065px;top:628.7px"></div>
<span class="a t" style="left:1085.7px;top:628.82px;font-size:15.5px;line-height:15.5px;transform:scaleX(0.826);transform-origin:0 0">Imprimir Descontos</span>
<div class="a rd" style="left:1227px;top:628.7px"></div>
<span class="a t" style="left:1247.7px;top:628.82px;font-size:15.5px;line-height:15.5px;transform:scaleX(0.850);transform-origin:0 0">Imprimir Total Nº de Itens</span>
<div class="a rd" style="left:1424.5px;top:628.7px"></div>
<span class="a t" style="left:1445px;top:628.82px;font-size:15.5px;line-height:15.5px;transform:scaleX(0.847);transform-origin:0 0">Imprimir Total Quantidade</span>
<div class="a btn" style="left:300.5px;top:678.75px;width:375px;height:63.75px;"></div>
<svg style="left:308px;top:688.5px" width="44.0" height="44.0" viewBox="0 0 44 44"><defs><radialGradient id="g5" cx=".4" cy=".6" r=".7"><stop offset="0" stop-color="#fff0a0"/><stop offset=".45" stop-color="#f0b428"/><stop offset="1" stop-color="#b8700c"/></radialGradient><linearGradient id="g6" x1="0" y1="0" x2="1" y2="1"><stop offset="0" stop-color="#7c7c84"/><stop offset=".5" stop-color="#e4e4ec"/><stop offset="1" stop-color="#6a6a78"/></linearGradient></defs><ellipse cx="14" cy="27" rx="16" ry="12" transform="rotate(48 14 27)" fill="#55555c"/><ellipse cx="15.500" cy="26" rx="15.500" ry="11.500" transform="rotate(48 15.500 26)" fill="url(#g6)"/><ellipse cx="25.500" cy="18.500" rx="17.500" ry="13" transform="rotate(50 25.500 18.500)" fill="#8a5608"/><ellipse cx="26.500" cy="17.500" rx="17" ry="12.800" transform="rotate(50 26.500 17.500)" fill="url(#g5)"/><path d="M31 10c-4-2-8 0-7 3.500s8 4 9 8-3 6-8 3.500M29 7l-4 22" fill="none" stroke="#a86a0c" stroke-width="1.800"/></svg>
<span class="a t" style="left:410px;top:701.77px;font-size:15.5px;line-height:15.5px;transform:scaleX(0.850);transform-origin:0 0"><u>F</u>orma e Condições de Pagamento</span>
<span class="a t" style="left:288.89px;top:763.02px;font-size:15.5px;line-height:15.5px;transform:scaleX(0.870);transform-origin:100% 0">Situação Atual</span>
<span class="a t" style="left:284.61px;top:799.52px;font-size:15.5px;line-height:15.5px;transform:scaleX(0.834);transform-origin:100% 0">Forma Entrega</span>
<span class="a t" style="left:291.22px;top:835.77px;font-size:15.5px;line-height:15.5px;transform:scaleX(0.845);transform-origin:100% 0">Transportador</span>
<span class="a t" style="left:284.59px;top:872.02px;font-size:15.5px;line-height:15.5px;transform:scaleX(0.856);transform-origin:100% 0">Dados Entrega</span>
<span class="a t" style="left:291.22px;top:910.77px;font-size:15.5px;line-height:15.5px;transform:scaleX(0.891);transform-origin:100% 0">DATA Entrega</span>
<div class="a cb" style="left:396.75px;top:757.5px;width:280px;height:25.5px;"></div>
<svg style="left:661px;top:767.5px" width="11" height="7" viewBox="0 0 11 7"><path d="M.7.800l4.800 4.800 4.800-4.800" fill="none" stroke="#5c5c5c" stroke-width="1.200"/></svg>
<span class="a t" style="left:401.75px;top:762.02px;font-size:15.5px;line-height:15.5px;transform:scaleX(0.851);transform-origin:0 0">Entrega direto para o cliente</span>
<div class="a cb" style="left:396.75px;top:793.75px;width:141.25px;height:25px;"></div>
<svg style="left:522.5px;top:803.5px" width="11" height="7" viewBox="0 0 11 7"><path d="M.7.800l4.800 4.800 4.800-4.800" fill="none" stroke="#5c5c5c" stroke-width="1.200"/></svg>
<span class="a t" style="left:546.75px;top:799.52px;font-size:15.5px;line-height:15.5px;transform:scaleX(0.857);transform-origin:0 0">Placa</span>
<div class="a" style="left:587.5px;top:793px;width:89.5px;height:26.25px;background:#fff;border:1px solid #5a5a5a;border-radius:3px"></div>
<div class="a y" style="left:591px;top:796px;width:61px;height:20.5px;"></div>
<svg style="left:661px;top:803.5px" width="11" height="7" viewBox="0 0 11 7"><path d="M.7.800l4.800 4.800 4.800-4.800" fill="none" stroke="#5c5c5c" stroke-width="1.200"/></svg>
<div class="a cb" style="left:396.75px;top:832px;width:280px;height:25.5px;"></div>
<svg style="left:661px;top:842px" width="11" height="7" viewBox="0 0 11 7"><path d="M.7.800l4.800 4.800 4.800-4.800" fill="none" stroke="#5c5c5c" stroke-width="1.200"/></svg>
<div class="a in g" style="left:398px;top:873px;width:277.75px;height:23.25px;"></div>
<svg style="left:398.75px;top:905px" width="28.0" height="28.5" viewBox="0 0 28 28.5"><rect x=".5" y=".5" width="27" height="27.500" rx="4" fill="#fdfdfd" stroke="#e2e2e2"/><rect x="2.500" y="3" width="22.800" height="22.800" rx="1.500" fill="#0c7c86"/><rect x="3.500" y="8" width="20" height="3" fill="#6ede3a"/><g fill="#58c848"><rect x="4" y="12" width="2.400" height="10"/><rect x="7.600" y="12" width="2.400" height="10"/><rect x="11.200" y="11" width="2.400" height="11"/><rect x="14.800" y="11" width="2.400" height="9"/><rect x="18.400" y="11" width="2.400" height="8"/><rect x="21.500" y="11" width="2" height="7"/></g><rect x="17" y="22" width="7.500" height="3" fill="#9aa8a0"/><rect x="3.500" y="4.500" width="2" height="2" fill="#7ad8d0"/><rect x="21.500" y="4.500" width="2" height="2" fill="#7ad8d0"/></svg>
<div class="a in g" style="left:435.5px;top:909.25px;width:96.5px;height:22.75px;"></div>
<span class="a t" style="left:471.88px;top:911.52px;font-size:15.5px;line-height:15.5px;transform:scaleX(0.950);transform-origin:50% 0">/  /</span>
<span class="a t" style="left:546.75px;top:910.77px;font-size:15.5px;line-height:15.5px;transform:scaleX(0.841);transform-origin:0 0">Hora</span>
<div class="a in g" style="left:589.25px;top:909.25px;width:52.5px;height:22.75px;"></div>
<span class="a t" style="left:612.34px;top:911.52px;font-size:15.5px;line-height:15.5px;transform:scaleX(0.900);transform-origin:50% 0">:</span>
<div class="a gb" style="left:691.5px;top:677px;width:505.5px;height:293.5px;"></div>
<div class="a btn" style="left:712px;top:690px;width:221px;height:48px;"></div>
<div class="a btn" style="left:955.5px;top:690px;width:221.5px;height:48px;"></div>
<div class="a btn" style="left:712px;top:744px;width:221px;height:48px;"></div>
<div class="a btn" style="left:955.5px;top:744px;width:221.5px;height:48px;"></div>
<div class="a btn" style="left:712px;top:799px;width:221px;height:48px;"></div>
<div class="a btn" style="left:955.5px;top:799px;width:221.5px;height:48px;"></div>
<div class="a btn" style="left:712px;top:854px;width:221px;height:48px;"></div>
<div class="a btn" style="left:955.5px;top:854px;width:221.5px;height:48px;"></div>
<div class="a btn" style="left:712px;top:909px;width:221px;height:48px;"></div>
<div class="a btn" style="left:955.5px;top:909px;width:221.5px;height:48px;"></div>
<span class="a t" style="left:794.8px;top:706.02px;font-size:15.5px;line-height:15.5px;transform:scaleX(0.880);transform-origin:0 0"><u>A</u>utomático    (F3)</span>
<span class="a t" style="left:1019.9px;top:706.02px;font-size:15.5px;line-height:15.5px;transform:scaleX(0.845);transform-origin:0 0"><u>E</u>mitir Jato/Laser (F8)</span>
<span class="a t" style="left:788.9px;top:760.02px;font-size:15.5px;line-height:15.5px;transform:scaleX(0.840);transform-origin:0 0"><u>I</u>ncluir Produto  (F4)</span>
<span class="a t" style="left:1026.4px;top:760.02px;font-size:15.5px;line-height:15.5px;transform:scaleX(0.826);transform-origin:0 0"><u>E</u>mitir Matricial   (F9)</span>
<span class="a t" style="left:786.2px;top:815.02px;font-size:15.5px;line-height:15.5px;transform:scaleX(0.834);transform-origin:0 0"><u>A</u>lterar Produto  (F5)</span>
<span class="a t" style="left:1022.6px;top:815.02px;font-size:15.5px;line-height:15.5px;transform:scaleX(0.829);transform-origin:0 0"><u>E</u>mitir CUPOM   (F10)</span>
<span class="a t" style="left:784.8px;top:870.02px;font-size:15.5px;line-height:15.5px;transform:scaleX(0.842);transform-origin:0 0"><u>E</u>xcluir Produto  (F6)</span>
<span class="a t" style="left:1017.2px;top:870.02px;font-size:15.5px;line-height:15.5px;transform:scaleX(0.842);transform-origin:0 0"><u>F</u>inalizar Pedido  (F11)</span>
<span class="a t" style="left:772.6px;top:925.02px;font-size:15.5px;line-height:15.5px;transform:scaleX(0.863);transform-origin:0 0"><u>S</u>ALVAR PEDIDO (F7)</span>
<span class="a t" style="left:1019px;top:925.02px;font-size:15.5px;line-height:15.5px;transform:scaleX(0.855);transform-origin:0 0"><u>S</u>AIR  PEDIDO  (F12)</span>
<svg style="left:720.2px;top:698px" width="30.0" height="30.0" viewBox="0 0 30 30"><circle cx="15" cy="15" r="13.200" fill="#ececec" stroke="#868c94" stroke-width="3"/><circle cx="15" cy="15" r="11.500" fill="none" stroke="#c8ccd2" stroke-width="1"/><g fill="#4a4a4a"><rect x="7" y="9" width="2" height="12"/><rect x="10" y="9" width="3" height="12"/><rect x="14" y="9" width="1.500" height="12"/><rect x="16.500" y="9" width="3" height="12"/><rect x="20.500" y="9" width="2" height="12"/></g></svg>
<svg style="left:716px;top:748.5px" width="44.0" height="39.0" viewBox="0 0 44 39"><path d="M1 7.500h8.500v25" fill="none" stroke="#2c2c30" stroke-width="2.600"/><rect x="8" y="30" width="35" height="4" rx="1.500" fill="#2c2c30"/><circle cx="15" cy="36" r="2.600" fill="#2c2c30"/><circle cx="37" cy="36" r="2.600" fill="#2c2c30"/><g stroke="#3a2420" stroke-width=".7"><rect x="19.500" y="1.500" width="13" height="11" fill="#ea7256"/><rect x="13" y="12.500" width="9.500" height="7.500" fill="#4cae4c"/><rect x="13" y="20" width="9.500" height="10" fill="#eea46c"/><rect x="22.500" y="13" width="8.500" height="17" fill="#de4a42"/><rect x="31" y="12.500" width="9" height="8.500" fill="#e8a06a"/><rect x="31" y="21" width="10.500" height="9" fill="#2c6ad0"/></g><path d="M23.500 6.500l2.300 2.300 3.800-4.300" fill="none" stroke="#7a2010" stroke-width="1.600"/><rect x="13.500" y="14.500" width="8.500" height="1.800" fill="#c8ecc8"/><rect x="23.500" y="13.500" width="6.500" height="3" fill="#fff"/><rect x="32" y="25" width="8.500" height="3" fill="#8ac4f8"/></svg>
<svg style="left:719.4px;top:810.2px" width="36.0" height="26.0" viewBox="0 0 36 26"><rect x=".5" y=".5" width="35" height="25" fill="#f4f4f4" stroke="#dcdcdc"/><rect x="2" y="2" width="32" height="3" fill="#5a82dc"/><g stroke="#e2e2e2" stroke-width="1"><path d="M2 8.500h32M2 17.500h32M2 21.500h32M13 5v20M24 5v20"/></g><rect x="2" y="10.500" width="32" height="5" fill="#e0b050"/><rect x="2" y="10.500" width="32" height="2" fill="#ecc878"/></svg>
<svg style="left:719.4px;top:863px" width="36.0" height="29.0" viewBox="0 0 36 29"><rect x=".5" y=".5" width="35" height="25" fill="#f4f4f4" stroke="#dcdcdc"/><rect x="2" y="2" width="32" height="3" fill="#5a82dc"/><g stroke="#e2e2e2" stroke-width="1"><path d="M2 8.500h32M2 17.500h32M2 21.500h32M13 5v20M24 5v20"/></g><defs><radialGradient id="g7" cx=".4" cy=".3" r=".8"><stop offset="0" stop-color="#ff9a7a"/><stop offset=".6" stop-color="#e03a1c"/><stop offset="1" stop-color="#a41c08"/></radialGradient></defs><circle cx="26.500" cy="20" r="8" fill="url(#g7)"/><rect x="21.500" y="18.500" width="10" height="3" rx=".8" fill="#fff"/></svg>
<svg style="left:718.7px;top:922.4px" width="28.0" height="21.0" viewBox="0 0 28 21"><defs><linearGradient id="g8" x1="0" y1="0" x2="1" y2="1"><stop offset="0" stop-color="#3ad41c"/><stop offset="1" stop-color="#0c8a10"/></linearGradient></defs><path d="M0 7l3.500-2.500 6.500 7.500q7-7 18-12-9 8-16 21z" fill="url(#g8)" stroke="#0a7a0a" stroke-width=".6"/></svg>
<svg style="left:961.5px;top:700.5px" width="29.0" height="28.0" viewBox="0 0 29 28"><defs><linearGradient id="g9" x1="0" y1="1" x2="1" y2="0"><stop offset="0" stop-color="#c8f0ff"/><stop offset=".45" stop-color="#4ab0f4"/><stop offset="1" stop-color="#1a4ed8"/></linearGradient><linearGradient id="g10" x1="0" y1="0" x2="1" y2="1"><stop offset="0" stop-color="#fafbff"/><stop offset="1" stop-color="#c4ccf2"/></linearGradient></defs><path d="M1 13.500L7 10L19 7Q24 8 25 11L26 18.500L9.500 27L1 22Z" fill="url(#g10)" stroke="#6c7496" stroke-width=".9" stroke-linejoin="round"/><path d="M4.500 14L12 9.500L19 7.300Q23.500 8 24.300 10.600L8 17.500Z" fill="url(#g9)"/><path d="M1 3.800L11.500.300L15.500 7.500L12 9.500L5 13.300Z" fill="#f6f6ff" stroke="#8088a8" stroke-width=".9" stroke-linejoin="round"/><path d="M8 17.500L24.500 11" fill="none" stroke="#f4f8ff" stroke-width="1.600"/><path d="M13.500 23L25.500 19.500L28.500 22L17.500 27.300Z" fill="#fafaff" stroke="#7a82a0" stroke-width=".9" stroke-linejoin="round"/></svg>
<svg style="left:961.5px;top:754.5px" width="29.0" height="28.0" viewBox="0 0 29 28"><defs><linearGradient id="g11" x1="0" y1="1" x2="1" y2="0"><stop offset="0" stop-color="#c8f0ff"/><stop offset=".45" stop-color="#4ab0f4"/><stop offset="1" stop-color="#1a4ed8"/></linearGradient><linearGradient id="g12" x1="0" y1="0" x2="1" y2="1"><stop offset="0" stop-color="#fafbff"/><stop offset="1" stop-color="#c4ccf2"/></linearGradient></defs><path d="M1 13.500L7 10L19 7Q24 8 25 11L26 18.500L9.500 27L1 22Z" fill="url(#g12)" stroke="#6c7496" stroke-width=".9" stroke-linejoin="round"/><path d="M4.500 14L12 9.500L19 7.300Q23.500 8 24.300 10.600L8 17.500Z" fill="url(#g11)"/><path d="M1 3.800L11.500.300L15.500 7.500L12 9.500L5 13.300Z" fill="#f6f6ff" stroke="#8088a8" stroke-width=".9" stroke-linejoin="round"/><path d="M8 17.500L24.500 11" fill="none" stroke="#f4f8ff" stroke-width="1.600"/><path d="M13.500 23L25.500 19.500L28.500 22L17.500 27.300Z" fill="#fafaff" stroke="#7a82a0" stroke-width=".9" stroke-linejoin="round"/></svg>
<svg style="left:961.5px;top:809.5px" width="29.0" height="28.0" viewBox="0 0 29 28"><defs><linearGradient id="g13" x1="0" y1="1" x2="1" y2="0"><stop offset="0" stop-color="#c8f0ff"/><stop offset=".45" stop-color="#4ab0f4"/><stop offset="1" stop-color="#1a4ed8"/></linearGradient><linearGradient id="g14" x1="0" y1="0" x2="1" y2="1"><stop offset="0" stop-color="#fafbff"/><stop offset="1" stop-color="#c4ccf2"/></linearGradient></defs><path d="M1 13.500L7 10L19 7Q24 8 25 11L26 18.500L9.500 27L1 22Z" fill="url(#g14)" stroke="#6c7496" stroke-width=".9" stroke-linejoin="round"/><path d="M4.500 14L12 9.500L19 7.300Q23.500 8 24.300 10.600L8 17.500Z" fill="url(#g13)"/><path d="M1 3.800L11.500.300L15.500 7.500L12 9.500L5 13.300Z" fill="#f6f6ff" stroke="#8088a8" stroke-width=".9" stroke-linejoin="round"/><path d="M8 17.500L24.500 11" fill="none" stroke="#f4f8ff" stroke-width="1.600"/><path d="M13.500 23L25.500 19.500L28.500 22L17.500 27.300Z" fill="#fafaff" stroke="#7a82a0" stroke-width=".9" stroke-linejoin="round"/></svg>
<svg style="left:961px;top:861px" width="30.0" height="34.0" viewBox="0 0 30 34"><defs><radialGradient id="g15" cx=".4" cy=".3" r=".8"><stop offset="0" stop-color="#9ae870"/><stop offset=".6" stop-color="#38a828"/><stop offset="1" stop-color="#1c7414"/></radialGradient></defs><path d="M1 .5h19l7 7v26H1z" fill="#fdfdfd" stroke="#d8d8d0"/><path d="M20 .5v7h7z" fill="#e8e8e0" stroke="#c8c8c0" stroke-width=".8"/><rect x="26" y="6" width="3.500" height="27" fill="#e4e4d8" opacity=".7"/><circle cx="22" cy="25.500" r="7.300" fill="url(#g15)"/><path d="M18 25.500l3 3.200 5.500-7" fill="none" stroke="#fff" stroke-width="2.200"/></svg>
<svg style="left:963px;top:919.8px" width="26.0" height="26.0" viewBox="0 0 26 26"><defs><radialGradient id="g16" cx=".5" cy=".75" r=".8"><stop offset="0" stop-color="#6ab4ff"/><stop offset=".55" stop-color="#2a6ee8"/><stop offset="1" stop-color="#0c2ea8"/></radialGradient></defs><circle cx="13" cy="13" r="12.500" fill="url(#g16)" stroke="#1a3aa0" stroke-width="1"/><ellipse cx="13" cy="7.500" rx="9" ry="5" fill="#fff" opacity=".25"/><path d="M6 11.300h7.500V7.500l7 5.500-7 5.500v-3.800H6z" fill="#fff"/></svg>
<span class="a t" style="left:1319.2px;top:686.32px;font-size:15.5px;line-height:15.5px;transform:scaleX(0.875);transform-origin:0 0">Nº Ítens/Quantidade</span>
<div class="a in y" style="left:1453.2px;top:676.8px;width:50.7px;height:30.3px;"></div>
<span class="a t" style="left:1489.68px;top:680.82px;font-size:15.5px;line-height:15.5px;font-weight:bold;transform:scaleX(0.900);transform-origin:100% 0">5</span>
<div class="a in y" style="left:1511px;top:676.8px;width:109.6px;height:30.3px;"></div>
<span class="a t" style="left:1576.2px;top:680.82px;font-size:15.5px;line-height:15.5px;font-weight:bold;transform:scaleX(0.880);transform-origin:100% 0">5,000</span>
<span class="a t" style="left:1301px;top:721.72px;font-size:15.5px;line-height:15.5px;transform:scaleX(0.874);transform-origin:0 0">VALOR DOS ITENS R$</span>
<div class="a in y" style="left:1454.6px;top:716px;width:166px;height:34px;"></div>
<span class="a t" style="left:1544.4px;top:720.68px;font-size:22px;line-height:22px;font-weight:bold;transform:scaleX(0.900);transform-origin:100% 0">439,60</span>
<span class="a t" style="left:1325.4px;top:764.22px;font-size:15.5px;line-height:15.5px;transform:scaleX(0.845);transform-origin:0 0">( - ) DESCONTO R$</span>
<div class="a in y" style="left:1454.6px;top:758px;width:166px;height:34.4px;"></div>
<span class="a t" style="left:1573.47px;top:763.18px;font-size:22px;line-height:22px;font-weight:bold;color:#ee1010;transform:scaleX(0.900);transform-origin:100% 0">0,00</span>
<div class="a in" style="left:1284.5px;top:806.8px;width:128.7px;height:23px;background:#fff"></div>
<span class="a t" style="left:1335.4px;top:810.2px;font-size:12.5px;line-height:12.5px;transform:scaleX(0.893);transform-origin:0 0">FRETE</span>
<span class="a t" style="left:1425.3px;top:808.52px;font-size:15.5px;line-height:15.5px;transform:scaleX(0.893);transform-origin:0 0">R$</span>
<div class="a in y" style="left:1454.6px;top:800.8px;width:166px;height:33.9px;"></div>
<span class="a t" style="left:1573.47px;top:806.28px;font-size:22px;line-height:22px;font-weight:bold;color:#1c1890;transform:scaleX(0.900);transform-origin:100% 0">0,00</span>
<span class="a t" style="left:1210px;top:879.88px;font-size:14.5px;line-height:14.5px;transform:scaleX(0.945);transform-origin:0 0">TOTAL R$</span>
<div class="a in" style="left:1284.5px;top:843px;width:337.5px;height:82.6px;background:#ffffdc"></div>
<span class="a t" style="left:1422.02px;top:850.84px;font-size:61px;line-height:61px;font-weight:bold;color:#1f0f96;transform:scaleX(0.658);transform-origin:100% 0">439,60</span>
</div></div>

</body>
</html>
